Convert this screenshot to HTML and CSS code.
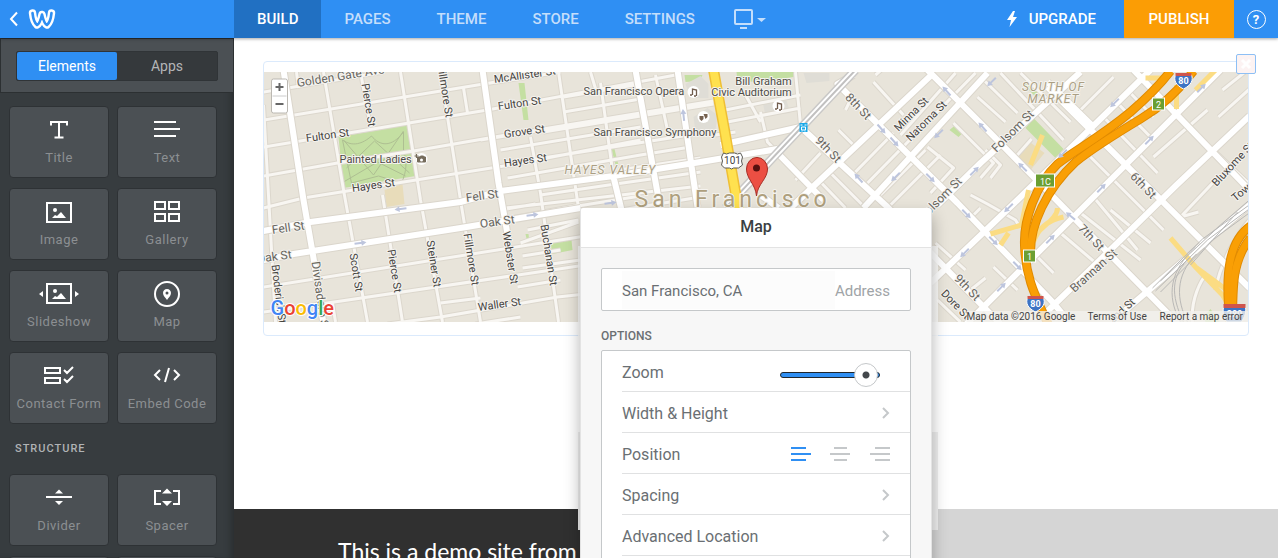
FILE: index.html
```html
<!DOCTYPE html>
<html lang="en">
<head>
<meta charset="utf-8">
<title>Site editor</title>
<link rel="stylesheet" href="styles.css">
</head>
<body>
<div class="app">
  <header class="topbar">
    <div class="brand">
      <button class="icon-btn" aria-label="Back"><svg width="10" height="16" viewBox="0 0 10 16"><path d="M8 1.500 2 8l6 6.500" fill="none" stroke="#fff" stroke-width="2"/></svg></button>
      <a class="logo" href="#" aria-label="Home"><svg width="28" height="22" viewBox="0 0 28 22"><path d="M4.500 5C5 10 6.500 15 9 17c2.500-1 4-6 5-10.500 1 4.500 2.500 9.500 5 10.500 2.500-2 4-7 4.500-12" fill="none" stroke="#fff" stroke-width="7.500" stroke-linecap="round" stroke-linejoin="round"/><path d="M4.500 5C5 10 6.500 15 9 17c2.500-1 4-6 5-10.500 1 4.500 2.500 9.500 5 10.500 2.500-2 4-7 4.500-12" fill="none" stroke="#2f8ff3" stroke-width="2.600" stroke-linecap="round" stroke-linejoin="round"/></svg></a>
    </div>
    <nav class="nav">
      <a class="nav-link active" href="#">BUILD</a>
      <a class="nav-link" href="#">PAGES</a>
      <a class="nav-link" href="#">THEME</a>
      <a class="nav-link" href="#">STORE</a>
      <a class="nav-link" href="#">SETTINGS</a>
    </nav>
    <button class="device" aria-label="Device view"><svg width="36" height="22" viewBox="0 0 36 22"><rect x="2" y="2" width="17" height="14" rx="1" fill="none" stroke="#c4defb" stroke-width="2"/><path d="M7 20h7" stroke="#c4defb" stroke-width="2"/><path d="M24 10h9l-4.500 4z" fill="#c4defb"/></svg></button>
    <a class="upgrade" href="#"><svg width="12" height="18" viewBox="0 0 12 18"><path d="M7 1 1 10h4l-1.500 7L11 7H7l2-6z" fill="#fff"/></svg>UPGRADE</a>
    <button class="publish">PUBLISH</button>
    <button class="help" aria-label="Help"><span>?</span></button>
  </header>

  <div class="workspace">
    <aside class="sidebar">
      <div class="tabs-wrap"><div class="tabs"><button class="tab on">Elements</button><button class="tab">Apps</button></div></div>
      <div class="tiles">
        <button class="tile"><svg viewBox="0 0 40 28"><path d="M12 9.500V6h16v3.500M20 6v15M15.500 21.500h9" fill="none" stroke="#fff" stroke-width="2"/></svg>Title</button>
        <button class="tile"><svg viewBox="0 0 40 28"><path d="M7 6h22M7 13h26M7 20h22" stroke="#fff" stroke-width="2"/></svg>Text</button>
        <button class="tile"><svg viewBox="0 0 40 28"><rect x="8" y="5" width="24" height="19" fill="none" stroke="#fff" stroke-width="2"/><circle cx="16" cy="12" r="2" fill="#fff"/><path d="M13 20l3-3 2 1 4-4 5 6z" fill="#fff"/></svg>Image</button>
        <button class="tile"><svg viewBox="0 0 40 28"><path d="M8 4h10v7H8zM22 4h10v7H22zM8 16h10v7H8zM22 16h10v7H22z" fill="none" stroke="#fff" stroke-width="2"/></svg>Gallery</button>
        <button class="tile"><svg viewBox="0 0 40 28"><rect x="8" y="4" width="24" height="19" fill="none" stroke="#fff" stroke-width="2"/><circle cx="16" cy="11" r="2" fill="#fff"/><path d="M13 19l3-3 2 1 4-4 5 6zM4 11v6l-4-3zM36 11v6l4-3z" fill="#fff"/></svg>Slideshow</button>
        <button class="tile"><svg viewBox="0 0 40 28"><circle cx="20" cy="14" r="12" fill="none" stroke="#fff" stroke-width="2"/><path fill-rule="evenodd" d="M20 9c-2.500 0-4 1.800-4 4 0 3 2.500 4.500 4 7 1.500-2.500 4-4 4-7 0-2.200-1.500-4-4-4zm0 2.500a1.500 1.500 0 1 1 0 3 1.500 1.500 0 0 1 0-3z" fill="#fff"/></svg>Map</button>
        <button class="tile"><svg viewBox="0 0 40 28"><path d="M6 6h15v5H6zM6 16h15v5H6zM25 8l3 3 6-6M25 17l3 3 6-6" fill="none" stroke="#fff" stroke-width="2"/></svg>Contact Form</button>
        <button class="tile"><svg viewBox="0 0 40 28"><path d="M13 8l-5 5 5 5M27 8l5 5-5 5M22 6l-4 14" fill="none" stroke="#fff" stroke-width="2"/></svg>Embed Code</button>
      </div>
      <h2 class="group">STRUCTURE</h2>
      <div class="tiles">
        <button class="tile"><svg viewBox="0 0 40 28"><path d="M7 13h26" stroke="#fff" stroke-width="2"/><path d="M16 9.500h8l-4-4zM16 17h8l-4 4z" fill="#fff"/></svg>Divider</button>
        <button class="tile"><svg viewBox="0 0 40 28"><path d="M14 7H8v13h6M26 7h6v13h-6" fill="none" stroke="#fff" stroke-width="2"/><path d="M15 9.500h10l-5-5zM15 17h10l-5 5z" fill="#fff"/></svg>Spacer</button>
        <button class="tile" aria-label="Search box"></button>
        <button class="tile" aria-label="Button"></button>
      </div>
    </aside>

    <main class="canvas">
      <section class="element">
        <button class="remove" aria-label="Remove element"><svg width="12" height="12" viewBox="0 0 12 12"><path d="M2 2l8 8M10 2l-8 8" stroke="#fff" stroke-width="3"/></svg></button>
        <svg class="map" viewBox="263 72 985 250" preserveAspectRatio="xMidYMid slice" role="img" aria-label="Map of San Francisco">
          <defs>
            <g id="minor">
              <path d="M263 92 383 72M263 120 483 84 560 72M263 147 487 110 675 75M263 176 337 163 413 151 500 136 713 101M263 208 303 198 510 165 640 140M263 287 585 236M263 312 327 303 585 265M387 324 440 317 557 297 585 294M480 140 640 114M543 132 713 104M563 97 640 84M563 112 640 99M500 150 640 127M504 164 695 134M507 178 640 155 690 147M618 170 700 158M540 195 615 184 700 172M505 208 700 186M500 220 580 205M565 208 640 196M590 215 700 197M440 303 480 298M475 324 520 317M500 210 535 204M520 243 578 222M522 256 560 250M522 268 580 260M517 287 560 280M527 230 578 220"/>
              <path d="M323 72 343 190 367 322M360 72 370 127M382 195 402 322M400 72 420 200 442 322M440 72 460 200 480 322M463 88 467 113M530 137 540 193 558 322M558 72 578 208M600 83 613 178M263 105 275 322M296 72 298 88M332 303 335 322M655 75 667 130M590 72 596 92"/>
              <path d="M725 110 800 95M727 122 800 108M715 135 735 132M760 112 767 142 778 153M795 72 800 125M745 95 760 122M850 100 845 110M873 82 903 115M838 130 853 145M820 153 795 180M850 177 893 133M867 183 975 73M900 135 955 73M830 173 865 208M820 182 845 208M927 147 953 168 930 193M953 123 993 163 980 178M977 97 1005 122M875 75 890 62M880 195 925 150M890 205 940 155M980 77 1017 113M1000 73 1063 140M1020 73 1070 122M1077 113 1113 77M1127 90 1153 117M1117 103 1150 137M1103 117 1157 173M1090 157 1130 197M1153 157 1207 110M1218 117 1249 89M1222 90 1247 70M1213 150 1249 184M1015 157 1031 139M970 195 987 204 1015 220 1018 225M980 208 968 220M935 243 965 270M993 267 1017 290M1060 233 1100 267M1037 257 1053 273M1093 197 1137 250M1080 213 1140 260M1110 210 1150 243M1130 197 1163 230M1180 217 1215 180M1198 212 1180 217M937 300 960 322M970 290 985 278M985 150 1000 165 990 178M1215 290C1220 260 1240 230 1249 220M1192 322C1190 300 1200 280 1207 273M1153 300 1170 320"/>
            </g>
            <g id="major">
              <path d="M263 231 310 222 460 202 500 191 613 176 700 162 777 149M263 260 293 254 460 228 580 208M283 70 303 200 313 258 323 324M482 70 498 183 508 240M635 70 657 193 660 210M677 70 697 207M613 177 621 210M720 145 800 127"/>
              <path d="M933 73 790 208M987 73 863 208M853 75 837 84 957 203 1053 303 1070 324M777 153 823 200M925 68 980 123 1167 313 1180 325M800 127 887 207 937 260 1000 324M1047 87 1249 288M1133 70 1249 190M1047 82 1093 127M930 283 1017 200 1150 70M965 325 1070 220 1220 70M1040 318 1120 240 1175 186 1249 116M1125 310 1249 205M937 205 980 163 1080 72M760 195 778 208"/>
            </g>
            <g id="freeway"><path d="M1170 71C1160 84 1145 99 1130 112 1100 137 1075 150 1057 164 1035 185 1023 220 1024 245 1025 280 1037 300 1048 325"/><path d="M1193 71C1175 95 1155 110 1140 119 1110 137 1090 150 1075 162 1045 190 1030 225 1030 252"/><path d="M1250 226C1230 240 1223 270 1230 325"/><path d="M1250 238C1232 260 1232 285 1232 325"/></g>
            <g id="arrow"><path d="M-6 0H2" stroke="#bdc5dd" stroke-width="2"/><path d="M1-3 6 0 1 3z" fill="#bdc5dd"/></g>
          </defs>
          <rect x="263" y="72" width="985" height="250" fill="#e8e4da"/>
          <path d="M338 137 407 125 415 176 343 188zM518 83h6l4 37h-5zM684 75h18l-3 6-14 1zM736 72h57v5l-33 5-23-1zM550 243l21-3 1 10-20 4zM525 234h3l1 9h-2zM611 149h3l4 16h-3zM1026 79l15 14-5 5-12-13zM1033 118 1063 149 1055 158 1025 128zM949 130l6-5 8 7-5 5zM1203 317l7-8 9 13h-14z" fill="#c4dfa2"/>
          <path d="M384 190 402 184 404 204 386 207zM1028 141 1044 153 1030 170 1018 158z" fill="#e8dcba"/>
          <path d="M685 84 700 76l8 8v14h-18zM693 117 707 108l10 7-2 14-20 3zM762 101h24l4 12-25 3zM803 73h26v8l-23 2z" fill="#dfddd6"/>
          <path d="M342 140c10 7 20 4 29-4 8 10 20 12 32-4v20c4 9 3 20-2 31l-23-7-27 7zM343 140l30 35 30-44M346 168l28-27 35 32M343 182l34-20 28 14" fill="none" stroke="#aebf92" stroke-width="1"/>
          <g fill="none" stroke-linejoin="round">
            <use href="#minor" stroke="#dcd7cd" stroke-width="5"/><use href="#minor" stroke="#f8f6f2" stroke-width="3"/>
            <use href="#major" stroke="#dbd6cc" stroke-width="8"/><use href="#major" stroke="#fff" stroke-width="6"/>
            <path d="M1170 238 1195 267 1222 295 1240 325M1042 135 1030 165M1028 190 1021 225 990 234M1057 208c0 12-20 20-25 32M1063 217c-15 3-25 10-30 25M1145 78h18M1176 85v24M1000 245l8-12M1195 267l30 22M1215 70l-20 20" stroke="#fbdc83" stroke-width="5"/>
            <path d="M855 70 725 208" stroke="#c9c8c7" stroke-width="9"/><path d="M855 70 725 208" stroke="#fff" stroke-width="6"/><path d="M855 70 725 208" stroke="#c1c0c0" stroke-width="2"/>
            <path d="M1152 288 1202 239 1250 204M1155 291 1207 240 1250 208M1160 292 1212 240 1250 212M1160 281 1220 225 1250 199M1183 322C1170 295 1170 275 1190 257M1180 322C1165 295 1170 270 1195 247M1187 322C1176 300 1174 276 1196 254M1190 265 1237 212" stroke="#b9b8b6" stroke-width="1"/>
            <path d="M713 70 724 130 738 210" stroke="#efbf35" stroke-width="11"/><path d="M713 70 724 130 738 210" stroke="#ffe14f" stroke-width="8"/>
            <use href="#freeway" stroke="#e08a00" stroke-width="9"/><use href="#freeway" stroke="#f99f05" stroke-width="7"/>
          </g>
          <use href="#arrow" transform="translate(400 209) rotate(172)"/><use href="#arrow" transform="translate(360 243) rotate(-8)"/><use href="#arrow" transform="translate(532 215) rotate(-8)"/><use href="#arrow" transform="translate(610 203) rotate(-8)"/><use href="#arrow" transform="translate(683 115) rotate(-96)"/>
          <use href="#arrow" transform="translate(881 129) rotate(48)"/><use href="#arrow" transform="translate(894 142) rotate(48)"/><use href="#arrow" transform="translate(858 178) rotate(228)"/><use href="#arrow" transform="translate(895 177) rotate(136)"/><use href="#arrow" transform="translate(930 178) rotate(45)"/><use href="#arrow" transform="translate(946 91) rotate(228)"/><use href="#arrow" transform="translate(982 127) rotate(228)"/><use href="#arrow" transform="translate(938 134) rotate(136)"/><use href="#arrow" transform="translate(991 82) rotate(136)"/><use href="#arrow" transform="translate(974 171) rotate(-45)"/><use href="#arrow" transform="translate(1022 167) rotate(225)"/><use href="#arrow" transform="translate(1062 154) rotate(136)"/><use href="#arrow" transform="translate(1114 103) rotate(136)"/><use href="#arrow" transform="translate(1149 140) rotate(-45)"/><use href="#arrow" transform="translate(1201 88) rotate(-45)"/><use href="#arrow" transform="translate(1101 188) rotate(-45)"/><use href="#arrow" transform="translate(966 214) rotate(45)"/><use href="#arrow" transform="translate(1008 208) rotate(136)"/><use href="#arrow" transform="translate(993 241) rotate(45)"/><use href="#arrow" transform="translate(964 253) rotate(136)"/><use href="#arrow" transform="translate(1017 266) rotate(45)"/><use href="#arrow" transform="translate(1050 239) rotate(-45)"/><use href="#arrow" transform="translate(1001 287) rotate(-45)"/><use href="#arrow" transform="translate(1070 216) rotate(220)"/>

          <g class="street">
            <text transform="translate(297 87) rotate(-9)" class="road">Golden Gate Ave</text>
            <text transform="translate(306 142) rotate(-8)">Fulton St</text>
            <text transform="translate(352 192) rotate(-8)">Hayes St</text>
            <text transform="translate(361 84) rotate(81)">Pierce St</text>
            <text transform="translate(437 66) rotate(81)">Fillmore St</text>
            <text transform="translate(494 83) rotate(-8)">McAllister St</text>
            <text transform="translate(498 110) rotate(-8)">Fulton St</text>
            <text transform="translate(504 138) rotate(-8)">Grove St</text>
            <text transform="translate(504 167) rotate(-8)">Hayes St</text>
            <text transform="translate(272 234) rotate(-8)" class="road">Fell St</text>
            <text transform="translate(466 202) rotate(-8)" class="road">Fell St</text>
            <text transform="translate(257 263) rotate(-8)" class="road">Oak St</text>
            <text transform="translate(480 228) rotate(-8)" class="road">Oak St</text>
            <text transform="translate(271 265) rotate(83)">Broderick St</text>
            <text transform="translate(311 262) rotate(82)" class="road">Divisadero St</text>
            <text transform="translate(349 254) rotate(81)">Scott St</text>
            <text transform="translate(387 250) rotate(81)">Pierce St</text>
            <text transform="translate(426 241) rotate(81)">Steiner St</text>
            <text transform="translate(463 234) rotate(81)">Fillmore St</text>
            <text transform="translate(502 232) rotate(81)">Webster St</text>
            <text transform="translate(540 225) rotate(81)">Buchanan St</text>
            <text transform="translate(478 311) rotate(-8)">Waller St</text>
            <text transform="translate(844 98) rotate(46)" class="road">8th St</text>
            <text transform="translate(814 141) rotate(46)" class="road">9th St</text>
            <text transform="translate(898 132) rotate(-45)">Minna St</text>
            <text transform="translate(910 142) rotate(-45)">Natoma St</text>
            <text transform="translate(996 153) rotate(-45)" class="road">Folsom St</text>
            <text transform="translate(924 220) rotate(-45)" class="road">Folsom St</text>
            <text transform="translate(1129 177) rotate(46)" class="road">6th St</text>
            <text transform="translate(1077 229) rotate(46)" class="road">7th St</text>
            <text transform="translate(953 279) rotate(46)" class="road">9th St</text>
            <text transform="translate(940 294) rotate(46)">Dore St</text>
            <text transform="translate(1074 293) rotate(-42)" class="road">Brannan St</text>
            <text transform="translate(1216 187) rotate(-47)">Bluxome St</text>
            <text transform="translate(1235 202) rotate(-40)">Townsend</text>
            <text transform="translate(1112 324) rotate(-42)">2nd St</text>
          </g>
          <g class="place">
            <text x="339" y="163">Painted Ladies</text>
            <text x="583" y="95">San Francisco Opera</text>
            <text x="593" y="136">San Francisco Symphony</text>
            <text x="763" y="85" text-anchor="middle">Bill Graham</text><text x="751" y="96" text-anchor="middle">Civic Auditorium</text>
          </g>
          <g class="area"><text x="564" y="174">HAYES VALLEY</text><text x="1053" y="91" text-anchor="middle">SOUTH OF</text><text x="1053" y="103" text-anchor="middle">MARKET</text></g>
          <text class="city" x="634" y="207">San Francisco</text>
          <g fill="#fff"><circle cx="421" cy="159" r="6"/><circle cx="693" cy="92" r="6"/><circle cx="703" cy="117" r="6"/><circle cx="778" cy="106" r="6"/></g>
          <path d="M417 157h2l1-1h3l1 1h1v5h-8zM416 154v4M414 156h4" fill="#766c5c" stroke="#766c5c"/><circle cx="421" cy="160" r="1.500" fill="#fff"/>
          <g fill="none" stroke="#705c4d" stroke-width="1.300"><path id="note" d="M692 95v-6l4 1v6M689.500 95h2M693.500 96h2"/><use href="#note" x="85" y="14"/></g>
          <path d="M699 116h4v3l-2 2-2-2zM703 114h4v3l-2 2z" fill="#766150"/>
          <rect x="799" y="123" width="8" height="9" fill="#19a8e8"/><path d="M801 127h4v3h-4zM800 125h2M804 125h2M801 131h1M804 131h1" stroke="#fff" fill="none"/>
          <path d="M723 153l3 1 3-1h5l3 1 3-1 2 4-1 4 1 4-4 3h-5l-2 1-2-1h-5l-3-3 1-4-1-4z" fill="#fff" stroke="#5b5b56"/><text class="shield dark" x="732" y="164">101</text>
          <g stroke="#fff" fill="#6b9f33"><rect x="1035" y="174" width="19" height="13"/><rect x="1152" y="98" width="12" height="12"/><rect x="1023" y="250" width="12" height="12"/></g>
          <g class="exit"><text x="1045" y="185">1C</text><text x="1158" y="108">2</text><text x="1029" y="260">1</text></g>
          <g id="i80"><path d="M1027 298h16c2 5 0 10-8 14-8-4-10-9-8-14z" fill="#3d73c4" stroke="#fff"/><path d="M1027 296h16v3h-16z" fill="#cf554d"/><text class="shield" x="1035" y="307">80</text></g>
          <use href="#i80" x="148" y="-223"/>
          <path d="M1223 307h22c1 6-1 10-4 15h-15c-3-5-4-9-3-15z" fill="#3d73c4" stroke="#fff"/><path d="M1223 304h22v4h-22z" fill="#cf554d"/><text class="shield" x="1234" y="317">280</text>
          <path d="M756 196c-1-12-10-17-10-27a10 11 0 0 1 21 0c0 10-10 15-11 27z" fill="#ec4f43" stroke="#a72e26"/><circle cx="756" cy="168" r="3.500" fill="#57100e"/>
          <rect x="966" y="311" width="282" height="11" fill="#f3f1ed" opacity=".8"/>
          <g class="credit"><text x="966" y="320">Map data ©2016 Google</text><text x="1087" y="320">Terms of Use</text><text x="1159" y="320">Report a map error</text></g>
          <rect x="271" y="79" width="16" height="34" rx="2" fill="#fff" stroke="#bbb8b2"/><path d="M272 96h14" stroke="#ccc"/><path d="M275 87h8M279 83v8M275 104h8" stroke="#666" stroke-width="2"/>
          <text class="google" x="270" y="315"><tspan fill="#4285f4">G</tspan><tspan fill="#ea4335">o</tspan><tspan fill="#fbbc05">o</tspan><tspan fill="#4285f4">g</tspan><tspan fill="#34a853">l</tspan><tspan fill="#ea4335">e</tspan></text>
        </svg>
      </section>
      <footer class="site-footer"><p>This is a demo site from</p></footer>
      <div class="panel-ghost"></div>
      <section class="panel" aria-label="Map settings">
        <h1 class="panel-title">Map</h1>
        <div class="panel-body">
          <div class="field"><input id="address" type="text" value="San Francisco, CA"><label for="address">Address</label></div>
          <h2 class="options-title">OPTIONS</h2>
          <div class="options">
            <div class="row"><label for="zoom">Zoom</label><input id="zoom" class="zoom" type="range" min="0" max="100" value="99"></div>
            <button class="row">Width &amp; Height<svg width="8" height="12" viewBox="0 0 8 12"><path d="M1 1l5 5-5 5" fill="none" stroke="#c5c8ca" stroke-width="2"/></svg></button>
            <div class="row"><span>Position</span><div class="aligns">
              <button class="icon-btn" aria-label="Left"><svg width="21" height="16" viewBox="0 0 21 16"><path d="M0 2h15M0 8h20M0 14h15" stroke="#2f8ff3" stroke-width="2"/></svg></button>
              <button class="icon-btn" aria-label="Center"><svg width="21" height="16" viewBox="0 0 21 16"><path d="M4 2h13M0 8h20M4 14h13" stroke="#c5c8ca" stroke-width="2"/></svg></button>
              <button class="icon-btn" aria-label="Right"><svg width="21" height="16" viewBox="0 0 21 16"><path d="M6 2h15M1 8h20M6 14h15" stroke="#c5c8ca" stroke-width="2"/></svg></button>
            </div></div>
            <button class="row">Spacing<svg width="8" height="12" viewBox="0 0 8 12"><path d="M1 1l5 5-5 5" fill="none" stroke="#c5c8ca" stroke-width="2"/></svg></button>
            <button class="row">Advanced Location<svg width="8" height="12" viewBox="0 0 8 12"><path d="M1 1l5 5-5 5" fill="none" stroke="#c5c8ca" stroke-width="2"/></svg></button>
          </div>
        </div>
      </section>
    </main>
  </div>
</div>
</body>
</html>
```
FILE: styles.css
```css
* { box-sizing: border-box; }
body { margin: 0; font-family: Roboto, "Open Sans", sans-serif; overflow: hidden; }
button { border: 0; padding: 0; background: none; font: inherit; color: inherit; cursor: pointer; }
a { color: inherit; text-decoration: none; }
.app { display: flex; flex-direction: column; height: 100vh; }
.topbar { display: flex; flex: none; height: 38px; background: #2f8ff3; color: #fff; font-size: 15px; font-weight: 500; box-shadow: 0 1px 3px rgba(0,0,0,.35); position: relative; z-index: 3; }
.brand { display: flex; align-items: center; gap: 9px; width: 234px; padding-left: 9px; }
.icon-btn, .logo { display: flex; }
.nav { display: flex; }
.nav-link { display: flex; align-items: center; padding: 0 23px; color: #c4defb; }
.nav-link.active { background: #2170c2; color: #fff; }
.device { display: flex; align-items: center; padding: 0 15px; }
.upgrade { display: flex; align-items: center; gap: 11px; margin-left: auto; padding-right: 28px; }
.publish { width: 110px; background: #fb9d05; }
.help { width: 44px; display: flex; align-items: center; justify-content: center; }
.help span { width: 19px; height: 19px; border: 1px solid #fff; border-radius: 50%; font-size: 13px; line-height: 17px; font-weight: 700; }

.workspace { display: flex; flex: 1; min-height: 0; }
.sidebar { flex: none; width: 234px; background: #373c3f; overflow: hidden; box-shadow: inset -6px 0 6px -3px #2a2e30; }
.tabs-wrap { padding: 12px 15px 11px; background: #4b5054; border: 1px solid #2c3032; }
.tabs { display: flex; height: 30px; background: #35393c; border: 1px solid #303437; border-radius: 2px; font-size: 14px; line-height: 26px; color: #b3b5b7; }
.tab { flex: 1; }
.tab.on { background: #2f8ff3; color: #fff; border-radius: 2px; }
.tiles { display: grid; grid-template-columns: 100px 100px; gap: 10px 8px; padding: 0 9px; }
.tabs-wrap + .tiles { padding-top: 13px; }
.tile { height: 72px; display: flex; flex-direction: column; align-items: center; padding-top: 9px; gap: 5px; background: #4b5054; border: 1px solid #2e3235; border-radius: 4px; color: #8b8f92; font-size: 13px; line-height: 18px; letter-spacing: .5px; white-space: nowrap; }
.tile svg { width: 40px; height: 28px; flex: none; }
.group { margin: 0; padding: 0 15px; font-size: 11px; line-height: 50px; font-weight: 500; letter-spacing: 1px; color: #b0b3b5; }

.canvas { flex: 1; position: relative; min-width: 0; display: flex; flex-direction: column; overflow: hidden; background: #fff; }
.element { position: relative; margin: 23px 29px 0; padding: 10px 0 13px; border: 1px solid #dbeafc; border-radius: 4px; }
.map { display: block; width: 100%; height: 250px; font-family: Roboto, sans-serif; }
.map text { paint-order: stroke; stroke: #f5f3ef; stroke-width: 2px; stroke-linejoin: round; }
.street { font-size: 11px; fill: #46443f; }
.street .road { font-size: 12px; fill: #67655e; }
.place { font-size: 11px; fill: #4d4b46; }
.area { font-size: 12px; font-style: italic; fill: #ab9f83; letter-spacing: 1px; }
.map .city { font-size: 23px; fill: #ae9f7d; letter-spacing: 4px; }
.map .shield { font-size: 9px; font-weight: 700; fill: #fff; stroke: none; text-anchor: middle; }
.map .shield.dark { font-weight: 400; font-size: 10px; fill: #444; }
.map .exit text { font-size: 9px; fill: #fff; stroke: none; text-anchor: middle; }
.map .credit text { font-size: 10px; fill: #444; stroke: none; }
.map .google { font-size: 20px; font-weight: 500; stroke: #fff; }
.remove { position: absolute; top: -8px; right: -8px; width: 20px; height: 20px; display: flex; align-items: center; justify-content: center; background: #fcf3f3; border: 1px solid #8dbff5; border-radius: 2px; }
.site-footer { flex: none; height: 49px; margin-top: auto; padding: 27px 0 0 104px; background: linear-gradient(90deg, #303030 36%, #d5d5d5 36%); overflow: hidden; }
.site-footer p { margin: 0; color: #fff; font: 23px/30px Lato, sans-serif; white-space: nowrap; }
.panel-ghost { position: absolute; left: 344px; top: 208px; width: 360px; height: 284px; background: linear-gradient(rgba(255,255,255,.8) 186px, #efefef 186px); }
.panel { position: absolute; left: 346px; top: 170px; width: 352px; background: #f7f7f7; border: 1px solid #e3e3e3; border-top: 0; border-radius: 3px; box-shadow: 0 8px 16px rgba(0,0,0,.3); color: #6a6f73; font-size: 15px; }
.panel-title { margin: 0; height: 40px; background: #fff; border-bottom: 1px solid #e3e3e3; border-radius: 3px 3px 0 0; text-align: center; font-size: 16px; line-height: 38px; font-weight: 500; color: #3a3f43; }
.panel-body { padding: 20px; }
.field { display: flex; align-items: center; height: 43px; padding: 0 20px; background: #fff; border: 1px solid #c5c8ca; border-radius: 2px; }
.field input { flex: 1; min-width: 0; height: 38px; padding: 2px 0 0; border: 0; background: #fcfcfc; font: inherit; color: inherit; outline: 0; }
.field label { color: #a0a4a7; padding-top: 2px; }
.options-title { margin: 0; padding-top: 6px; height: 39px; font-size: 12px; line-height: 39px; font-weight: 500; }
.options { background: #fff; border: 1px solid #c5c8ca; border-radius: 2px; padding: 0 0 40px 20px; font-size: 16px; }
.row { display: flex; align-items: center; justify-content: space-between; width: 100%; height: 41px; padding: 2px 20px 0 0; border-bottom: 1px solid #e0e1e2; text-align: left; }
.aligns { display: flex; gap: 18px; }
.zoom { appearance: none; width: 100px; height: 24px; margin: 6px 10px 0 0; background: transparent; }
.zoom::-webkit-slider-runnable-track { height: 6px; border: 1px solid #20262b; border-radius: 3px; background: #2f8ff3; }
.zoom::-webkit-slider-thumb { appearance: none; width: 24px; height: 24px; margin-top: -10px; border: 1px solid #c5c8ca; border-radius: 50%; background: radial-gradient(circle, #43484c 3px, #fff 4px); }
```
